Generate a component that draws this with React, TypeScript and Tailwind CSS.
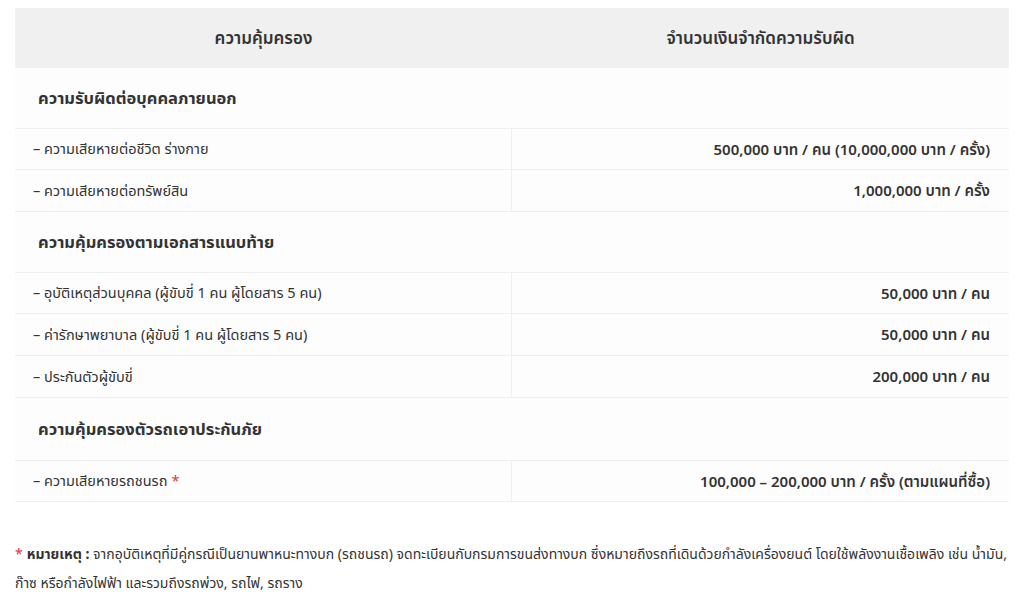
const sections = [
  {
    title: "ความรับผิดต่อบุคคลภายนอก",
    rows: [
      { label: "ความเสียหายต่อชีวิต ร่างกาย", value: "500,000 บาท / คน (10,000,000 บาท / ครั้ง)" },
      { label: "ความเสียหายต่อทรัพย์สิน", value: "1,000,000 บาท / ครั้ง" },
    ],
  },
  {
    title: "ความคุ้มครองตามเอกสารแนบท้าย",
    rows: [
      { label: "อุบัติเหตุส่วนบุคคล (ผู้ขับขี่ 1 คน ผู้โดยสาร 5 คน)", value: "50,000 บาท / คน" },
      { label: "ค่ารักษาพยาบาล (ผู้ขับขี่ 1 คน ผู้โดยสาร 5 คน)", value: "50,000 บาท / คน" },
      { label: "ประกันตัวผู้ขับขี่", value: "200,000 บาท / คน" },
    ],
  },
  {
    title: "ความคุ้มครองตัวรถเอาประกันภัย",
    rows: [{ label: "ความเสียหายรถชนรถ", value: "100,000 – 200,000 บาท / ครั้ง (ตามแผนที่ซื้อ)", star: true }],
  },
];

export default function App() {
  return (
    <div
      className="min-h-[604px] bg-white px-[15px] pt-[8px] text-[#333]"
      style={{ fontFamily: '"Noto Sans", "Noto Sans Thai", Lato, sans-serif' }}
    >
      <div className="w-[994px] bg-[#fdfdfd]">
        {/* Header */}
        <div className="grid h-[60px] grid-cols-2 items-center bg-[#f0f0f0] text-[17px] font-semibold">
          <div className="text-center">ความคุ้มครอง</div>
          <div className="text-center">จำนวนเงินจำกัดความรับผิด</div>
        </div>

        {sections.map((section, i) => (
          <div key={section.title}>
            <div
              className={`flex items-center pl-[23px] text-[16.5px] font-bold ${
                i === 2 ? "h-[62px]" : "h-[60px]"
              }`}
            >
              {section.title}
            </div>
            {section.rows.map((row, j) => (
              <div
                key={row.label}
                className={`grid h-[42px] grid-cols-2 border-b border-[#efefef] ${j === 0 ? "border-t" : ""}`}
              >
                <div className="flex items-center border-r border-[#efefef] pl-[18px] text-[14.5px]">
                  – {row.label}
                  {row.star && <span className="ml-1 text-[#e0323a]">*</span>}
                </div>
                <div className="flex items-center justify-end pr-[19px] text-[15px] font-semibold">
                  {row.value}
                </div>
              </div>
            ))}
          </div>
        ))}
      </div>

      {/* Note */}
      <p className="mt-[37px] w-[994px] text-[14px] leading-[29px]">
        <span className="mr-1 text-[#e0323a]">*</span>
        <span className="font-bold">หมายเหตุ :</span> จากอุบัติเหตุที่มีคู่กรณีเป็นยานพาหนะทางบก (รถชนรถ) จดทะเบียนกับกรมการขนส่งทางบก ซึ่งหมายถึงรถที่เดินด้วยกำลังเครื่องยนต์ โดยใช้พลังงานเชื้อเพลิง เช่น น้ำมัน, ก๊าซ หรือกำลังไฟฟ้า และรวมถึงรถพ่วง, รถไฟ, รถราง
      </p>
    </div>
  );
}
